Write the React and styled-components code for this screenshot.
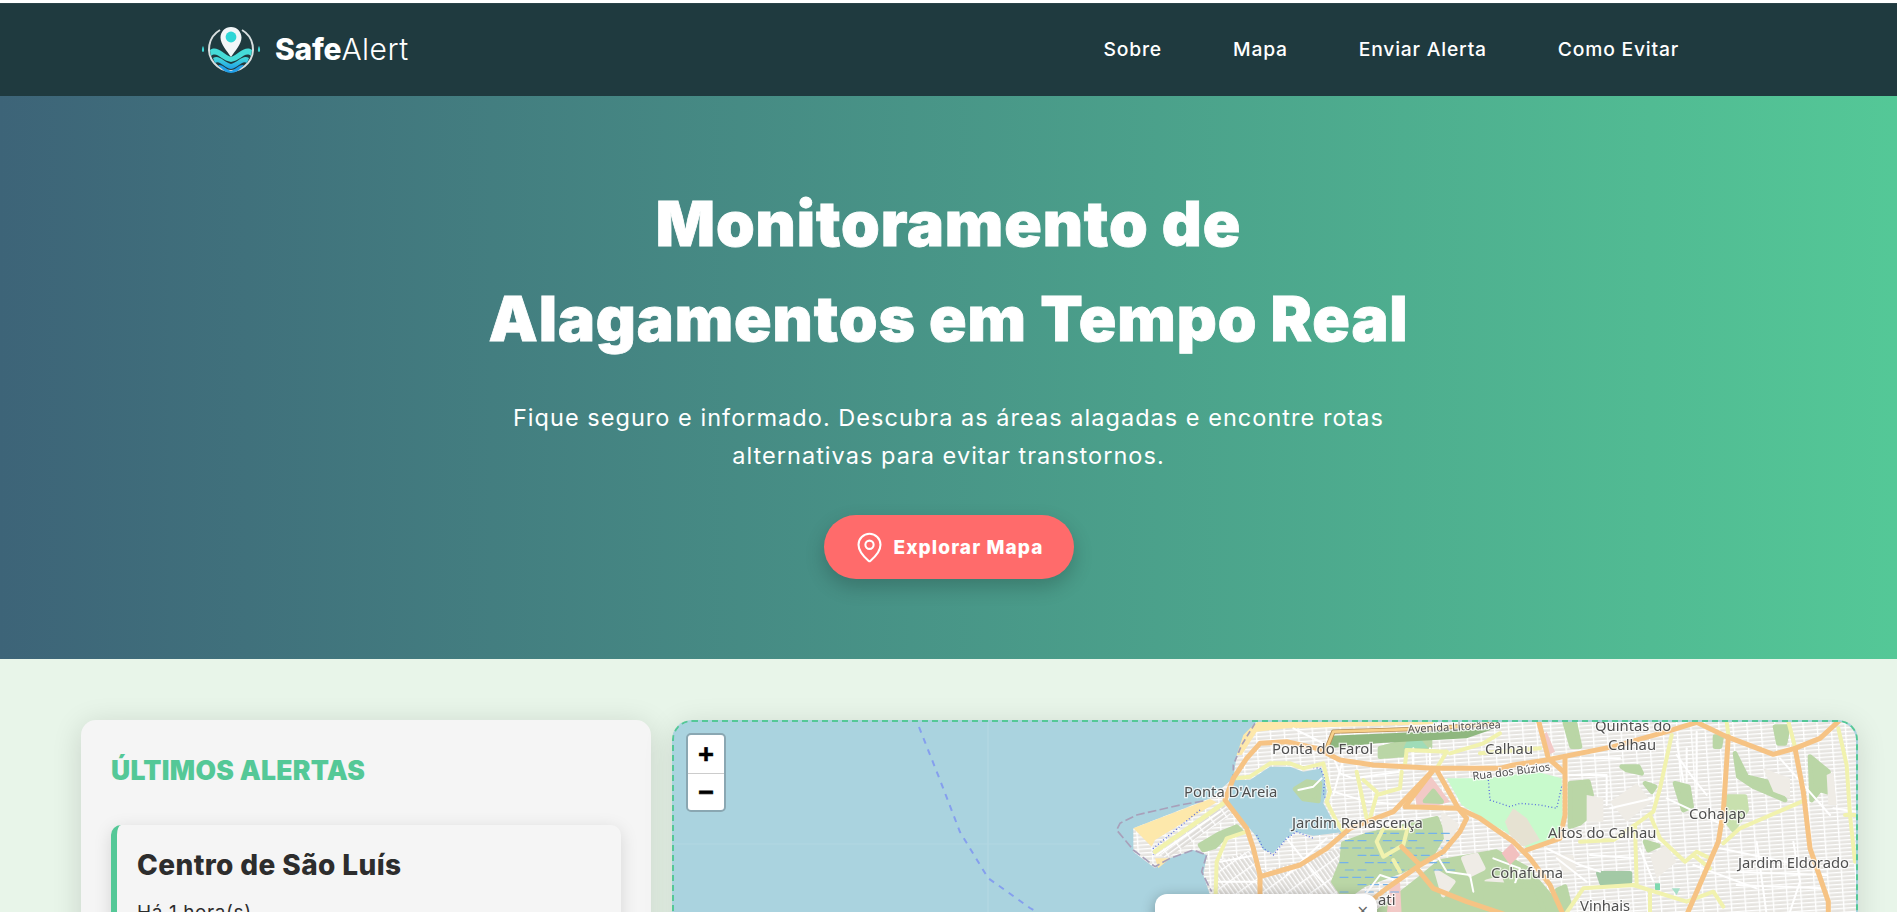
import React from "react";
import styled, { createGlobalStyle } from "styled-components";
import { MapPin } from "lucide-react";

const Global = createGlobalStyle`
  html, body { margin: 0; padding: 0; height: 100%; overflow: hidden; background: #fff; }
  body { font-family: Inter, "Noto Sans", sans-serif; color: #2d2d2d; }
  * { box-sizing: border-box; }
`;

const Page = styled.div`
  height: 912px;
  overflow: hidden;
  padding-top: 3px;
  background: #fff;
`;
const Header = styled.header`
  height: 93px;
  background: #1f3a3f;
  border-top: 1px solid #2a4449;
  display: flex;
  align-items: center;
  justify-content: space-between;
  padding: 0 218px 2px 200px;
`;
const Brand = styled.a`
  display: flex;
  align-items: center;
  gap: 13px;
  color: #fff;
  font-size: 30px;
  line-height: 1;
`;
const BrandStrong = styled.strong`
  font-weight: 800;
  letter-spacing: -0.2px;
`;
const BrandLight = styled.span`
  font-weight: 300;
  letter-spacing: 0.5px;
`;
const Nav = styled.nav`
  display: flex;
  gap: 71px;
`;
const NavLink = styled.a`
  color: #fff;
  font-size: 19.3px;
  font-weight: 500;
  letter-spacing: 0.8px;
`;
const Hero = styled.section`
  height: 563px;
  background: linear-gradient(90deg, #3d6478 0%, #54c897 100%);
  display: flex;
  flex-direction: column;
  align-items: center;
  padding-top: 80px;
  color: #fff;
`;
const Title = styled.h1`
  margin: 0;
  font-size: 62px;
  font-weight: 900;
  line-height: 95px;
  text-align: center;
  letter-spacing: 0.9px;
  -webkit-text-stroke: 0.8px #fff;
`;
const Lead = styled.p`
  margin: 33px 0 40px;
  width: 900px;
  font-size: 23.5px;
  line-height: 38px;
  text-align: center;
  font-weight: 400;
  letter-spacing: 1.03px;
`;
const CTA = styled.a`
  width: 250px;
  height: 64px;
  border-radius: 32px;
  background: #ff6b6b;
  box-shadow: 0 8px 20px rgba(0, 0, 0, 0.2);
  display: flex;
  align-items: center;
  gap: 8px;
  padding-left: 29px;
  color: #fff;
  font-size: 19px;
  font-weight: 800;
  letter-spacing: 1.1px;
`;
const Content = styled.main`
  height: 400px;
  background: #e8f5e9;
  display: grid;
  grid-template-columns: 570px 1186px;
  column-gap: 21px;
  padding: 61px 0 0 81px;
  align-items: start;
`;
const Sidebar = styled.aside`
  background: #f5f5f5;
  border-radius: 15px;
  box-shadow: 0 5px 30px rgba(0, 0, 0, 0.14);
  padding: 29px 30px 30px;
  height: 420px;
`;
const SideTitle = styled.h2`
  margin: 0 0 33px;
  color: #54c897;
  font-size: 26.5px;
  line-height: 43px;
  font-weight: 900;
  text-transform: uppercase;
  letter-spacing: 0.27px;
`;
const AlertCard = styled.article`
  background: #f5f5f5;
  border-left: 6px solid #54c897;
  border-radius: 10px;
  box-shadow: 0 4px 18px rgba(0, 0, 0, 0.13);
  padding: 19px 20px 20px 20px;
`;
const AlertName = styled.h3`
  margin: 0 0 12px;
  font-size: 28px;
  line-height: 43px;
  font-weight: 800;
  letter-spacing: 0.4px;
  color: #2d2d2d;
`;
const AlertTime = styled.p`
  margin: 0;
  font-size: 19px;
  line-height: 28px;
  letter-spacing: 0.6px;
`;
const MapBox = styled.div`
  position: relative;
  height: 420px;
  border: 2px dashed #54c897;
  border-radius: 20px;
  overflow: hidden;
  background: #aad3df;
  box-shadow: 0 5px 30px rgba(0, 0, 0, 0.12);
`;
const MapArt = styled.svg`
  display: block;
  filter: blur(0.5px);
`;
const MapLabel = styled.text`
  font-family: "Noto Sans", "Open Sans", sans-serif;
  font-size: ${(p) => p.$size || 14.8}px;
  fill: #4f4f4f;
  stroke: #fff;
  stroke-opacity: 0.75;
  stroke-width: 2.4px;
  paint-order: stroke;
`;
const ZoomBar = styled.div`
  position: absolute;
  left: 12px;
  top: 11px;
  width: 40px;
  border: 2px solid #8aa7b2;
  border-radius: 5px;
  background: #fff;
  display: flex;
  flex-direction: column;
`;
const ZoomBtn = styled.a`
  height: 37.5px;
  display: flex;
  align-items: center;
  justify-content: center;
  font-family: "DejaVu Sans Mono", monospace;
  font-weight: 700;
  font-size: 25px;
  color: #000;
  -webkit-text-stroke: 0.7px #000;
  & + & { border-top: 1px solid #ccc; }
`;
const Popup = styled.div`
  position: absolute;
  left: 481px;
  top: 172px;
  width: 222px;
  height: 150px;
  background: #fff;
  border-radius: 12px;
  box-shadow: 0 3px 14px rgba(0, 0, 0, 0.3);
`;
const PopupClose = styled.a`
  position: absolute;
  right: 8px;
  top: 9px;
  font-family: "DejaVu Sans", sans-serif;
  font-size: 15px;
  line-height: 16px;
  color: #666;
`;

const Line = ({ p, c, w, dash }) => (
  <polyline points={p} fill="none" stroke={c} strokeWidth={w} strokeLinejoin="round" strokeLinecap={dash ? "butt" : "round"} strokeDasharray={dash} />
);
const Area = ({ p, c }) => <polygon points={p} fill={c} />;
const Blob = ({ p, c }) => <polygon points={p} fill={c} stroke={c} strokeWidth="14" strokeLinejoin="round" />;

const Z7 = "translate(1100 715) scale(.33333)";
const Z8 = "translate(1480 715) scale(.33333)";
const GREEN = "#bad6a6";

const forest7 = [
  "300,390 360,355 410,335 425,350 375,365 345,395 310,405",
  "730,385 800,360 1010,310 1030,360 990,430 900,470 790,510 735,550 700,500 725,440",
  "960,490 1020,440 1190,410 1280,460 1400,600 820,600",
  "840,100 990,60 990,95 920,100 910,120 840,125",
];
const forest8 = [
  "270,205 325,200 335,240 315,265 335,295 300,325 270,335",
  "255,25 285,25 300,95 275,95",
  "765,115 800,185 880,205 915,255 880,240 820,215 775,185",
  "990,125 1045,170 1055,235 1020,225 995,255",
  "585,205 625,215 635,275 610,285",
  "425,155 475,155 485,175 440,165",
  "495,205 525,215 515,230",
  "885,35 925,35 915,85 895,85",
  "495,380 535,392 505,405",
  "0,505 165,515 195,595 5,595",
  "255,515 270,575 245,590 232,525",
  "705,65 725,65 720,95 705,95",
];
const blocks7 = [
  "1090,430 1130,420 1150,460 1110,480",
  "1010,470 1060,500 1030,540",
  "1160,500 1200,490 1220,540 1175,550",
  "1030,300 1070,330 1040,380",
];
const blocks8 = [
  "390,260 470,205 515,260 440,320",
  "320,240 370,250 370,320 320,320",
  "510,420 560,390 590,440 530,490",
  "850,160 930,190 930,250 880,230",
  "1040,180 1060,170 1070,270 1045,270",
  "225,420 280,420 290,470 250,470",
];
const white7 = [
  "690,100 720,175 760,190 900,170",
  "700,230 800,260 920,270",
  "560,370 640,470 720,560",
  "680,370 560,480",
  "360,440 470,420",
  "350,500 470,500",
  "170,420 360,290",
  "730,130 700,240",
  "940,100 940,150",
  "990,100 990,150",
  "580,40 680,90",
  "780,560 840,480 900,500",
  "1010,420 1040,470 1110,480 1120,530",
  "1180,430 1260,460 1240,520",
];
const white8 = [
  "260,180 380,180 380,270",
  "390,280 520,250",
  "590,120 640,190 680,240",
  "560,250 730,330",
  "620,100 620,200",
  "520,370 580,400",
  "200,400 300,450 360,470",
  "230,430 320,500",
  "480,400 520,500",
  "720,400 960,450",
  "740,470 1040,480",
  "830,380 860,600",
  "900,130 1050,300",
  "1060,280 1130,290",
  "640,450 830,520",
  "770,510 1030,520",
  "590,80 610,200",
  "650,50 650,250",
  "300,130 420,130",
  "330,420 470,430",
  "940,380 960,500 930,590",
];
const yellow7 = [
  "410,190 450,185 510,145 570,145 610,160 670,145 690,230 680,260 710,320 730,350",
  "440,350 380,370 350,440 345,600",
  "770,170 800,310",
  "810,310 830,240 900,220 905,170",
  "790,195 830,230",
  "920,350 910,390 850,425 830,380 850,340 930,340",
  "880,435 900,470",
  "1050,115 1150,85 1200,55",
  "920,105 1040,110",
  "920,105 915,150",
  "1040,110 1010,160",
];
const yellow8 = [
  "0,115 180,100",
  "575,60 540,220 520,290 465,330 470,510",
  "510,300 540,370 615,440 650,410 690,430",
  "730,385 780,340 965,260",
  "255,600 310,520 460,510 620,560 700,530 730,575",
  "510,530 510,600",
  "300,380 400,375 465,330",
  "640,420 690,460",
  "1075,40 1100,150 1110,300 1125,440",
  "925,20 945,95",
  "740,20 745,60",
  "1095,300 1130,300",
];
const orange7 = [
  "400,190 440,130 480,85 560,80 650,100 720,135 820,150 1000,160 1200,160",
  "400,190 375,255 440,340 460,400 480,480 480,600",
  "480,485 600,450 680,400 750,340 880,290 1000,165",
  "1000,165 915,275 1075,280 1010,165",
  "1075,280 1100,310 1080,350 1030,410 960,450 905,395",
  "960,450 860,520 810,560 780,600",
  "950,460 1000,520 1100,560 1220,600",
  "1075,280 1140,310 1240,380 1290,430 1350,510 1390,600",
];
const orange8 = [
  "60,160 100,150 200,135 400,95 560,50 650,22 740,65 880,118 945,100 1020,70 1080,15",
  "140,405 240,370 255,300 255,130",
  "175,15 205,130 250,170",
  "745,65 730,290 715,380 620,600",
  "945,100 970,230 990,400 1045,560 1045,600",
];
const wetDashes = [];
for (let r = 0; r < 9; r++) {
  for (let c = 0; c < 9; c++) {
    if ((r * 5 + c * 3) % 4 === 3) continue;
    const x = 720 + c * 38 + (r % 2) * 16;
    const y = 355 + r * 22;
    if (y > 470 && x > 900) continue;
    wetDashes.push(`${x},${y} ${x + 24},${y}`);
  }
}

const labels = [
  ["Ponta do Farol", 1272, 754],
  ["Ponta D'Areia", 1184, 797],
  ["Jardim Renascença", 1292, 828],
  ["Calhau", 1485, 754],
  ["Quintas do", 1595, 731],
  ["Calhau", 1608, 750],
  ["Cohajap", 1689, 819],
  ["Altos do Calhau", 1548, 838],
  ["Jardim Eldorado", 1738, 868],
  ["Cohafuma", 1491, 878],
  ["Vinhais", 1580, 911],
  ["ati", 1378, 905],
];

const Hatch = ({ id, angle, base }) => (
  <pattern id={id} width="42" height="12" patternUnits="userSpaceOnUse" patternTransform={`rotate(${angle})`}>
    <rect width="42" height="12" fill={base} />
    <rect width="42" height="4" fill="#fff" />
    <rect width="4" height="12" fill="#fff" />
  </pattern>
);

function CityMap() {
  return (
    <MapArt width="1186" height="420" viewBox="674 722 1186 420" aria-label="Mapa de São Luís">
      <defs>
        <Hatch id="blkA" angle={-4} base="#e6e4e0" />
        <Hatch id="blkB" angle={-36} base="#dedcd8" />
        <Hatch id="blkC" angle={55} base="#dedcd8" />
      </defs>
      <rect x="674" y="722" width="1186" height="420" fill="#aad3df" />
      <line x1="988" y1="722" x2="988" y2="912" stroke="#b6d9e3" strokeWidth="1" />
      <line x1="674" y1="844" x2="1100" y2="844" stroke="#b2d7e2" strokeWidth="1" />
      <polyline points="919,727 940,780 960,832 988,878 1030,908 1060,925" fill="none" stroke="#859fee" strokeWidth="2" strokeDasharray="6 6" />

      <g transform={Z7}>
        <Area c="url(#blkA)" p="480,0 2300,0 2300,700 340,700 330,540 310,480 320,420 280,405 210,430 165,460 100,410 100,340 330,250 400,190 410,120" />
        <Area c="url(#blkB)" p="165,410 370,265 395,300 200,430" />
        <Area c="url(#blkC)" p="350,440 470,400 490,600 340,600" />
        <Area c="url(#blkC)" p="480,470 600,440 720,400 780,500 720,590 490,600" />
        {forest7.map((p) => <Blob key={p} p={p} c={GREEN} />)}
        {blocks7.map((p) => <Blob key={p} p={p} c="#efece6" />)}
        <Area c="#fde8ab" p="100,340 330,252 350,262 165,375 155,395" />
        <Area c="#fde8ab" p="165,430 210,430 175,460" />
        <Area c="#fde8ab" p="480,16 1000,16 1000,28 560,40 470,50 425,120 410,120 430,60 460,30" />
        <Area c="#aad3df" p="400,195 450,195 510,155 570,155 610,170 665,160 680,230 670,265 705,330 725,352 640,362 585,350 550,380 520,415 490,405 465,360 440,330 385,262" />
        <Blob c={GREEN} p="585,222 620,200 660,205 655,258 610,252" />
        <Line p="595,225 640,215 665,190" c="#fff" w="6" />
        <Line p="465,25 425,90 400,150 400,190" c="#a8a0ba" w="5" dash="18 10" />
        <Line p="310,258 240,270 110,300 60,325 50,345 100,405 165,455 210,430 280,405 320,420 305,470 335,530" c="#a8a0ba" w="5" dash="26 10" />
        <Area c="#f2c9c6" p="990,180 1050,260 1000,275 950,270 945,245" />
        <Blob c={GREEN} p="975,258 1000,228 1025,260" />
        <Area c="#f2c9c6" p="870,510 900,500 905,600 860,600" />
        <Area c="#9fdcb8" p="925,70 960,70 985,100 910,100" />
        {wetDashes.map((p) => <Line key={p} p={p} c="#74b2ea" w="3.5" />)}
        {white7.map((p) => <Line key={p} p={p} c="#fff" w="6" />)}
        <Line p="610,155 660,160 675,190 670,235 690,280" c="#5a6fe0" w="4" dash="3 7" />
        <Line p="470,360 490,400 520,420 560,370 590,350 640,370" c="#5a6fe0" w="4" dash="3 7" />
        <Line p="300,285 160,400 160,420" c="#5a6fe0" w="4" dash="3 7" />
      </g>

      <g transform={Z8}>
        {forest8.map((p) => <Blob key={p} p={p} c={GREEN} />)}
        <Blob c="#c8e0ae" p="745,245 795,245 800,285 760,345 745,325" />
        <Blob c="#a3c9a5" p="355,475 450,475 450,500 365,505" />
        {blocks8.map((p) => <Area key={p} p={p} c="#efece6" />)}
        <Area c="#c8facc" p="-100,190 20,190 170,170 245,190 250,370 140,400 100,365 0,305 -55,270" />
        <Area c="#e6e2d2" p="100,280 140,310 180,375 130,395 90,360 75,320" />
        <Area c="#f2c0bf" p="65,415 95,385 120,420 90,450" />
        <Area c="#f2c9c6" p="200,50 225,110 205,120 190,60" />
        <Area c="#7fd9b0" p="525,505 540,505 540,525 525,525" />
        <Area c="#a8e0c8" p="575,520 600,520 590,540" />
        {white8.map((p) => <Line key={p} p={p} c="#fff" w="6" />)}
        <Line p="25,195 30,255 90,275 120,265 180,270 230,280 245,215" c="#5a6fe0" w="4" dash="3 7" />
      </g>

      <g transform={Z7}>
        <Area c="#8fb77f" p="690,62 1180,42 1100,70 830,85 690,100" />
        <Line p="680,100 700,50 1000,40 1190,25" c="#b98f57" w="13" />
        <Line p="680,100 700,50 1000,40 1190,25" c="#f7d08a" w="8" />
        <Line p="165,410 370,265" c="#f1f2ae" w="14" />
        {yellow7.map((p) => <Line key={p} p={p} c="#f1f2ae" w="12" />)}
        {orange7.map((p) => <Line key={p} p={p} c="#f6c384" w="15" />)}
      </g>
      <g transform={Z8}>
        {yellow8.map((p) => <Line key={p} p={p} c="#f1f2ae" w="12" />)}
        {orange8.map((p) => <Line key={p} p={p} c="#f6c384" w="15" />)}
      </g>

      <MapLabel $size={11} transform="translate(1408 733) rotate(-3)">Avenida Litorânea</MapLabel>
      <MapLabel $size={11} transform="translate(1473 780) rotate(-7)">Rua dos Búzios</MapLabel>
      {labels.map(([t, x, y]) => (
        <MapLabel key={t + x} x={x} y={y}>{t}</MapLabel>
      ))}
    </MapArt>
  );
}

function LogoMark() {
  return (
    <svg width="62" height="60" viewBox="0 0 62 60" aria-hidden="true">
      <defs>
        <linearGradient id="wave" x1="0" y1="0" x2="0" y2="1">
          <stop offset="0" stopColor="#45dcd8" />
          <stop offset="1" stopColor="#1f9fe8" />
        </linearGradient>
      </defs>
      <path d="M3 27 C1.8 29 1.4 33 3 33 C4.6 33 4.2 29 3 27Z" fill="#3fd6d6" />
      <path d="M59 27 C57.8 29 57.4 33 59 33 C60.6 33 60.2 29 59 27Z" fill="#3fd6d6" />
      <path d="M20 11 A22 22 0 1 0 42 11" fill="none" stroke="#d8dfe0" strokeWidth="2" />
      <path d="M10 31 C17 26 23 35 31 38 C39 35 45 26 52 31 L51 37 C45 32 40 42 31 43 C22 42 17 32 11 37Z" fill="#45dcd8" />
      <path d="M13 39 C19 35 24 43 31 45 C38 43 43 35 49 39 L47 44 C42 41 38 49 31 50 C24 49 20 41 15 44Z" fill="url(#wave)" />
      <path d="M18 46 C23 45 27 51 31 52 C35 51 39 45 44 46 C40 51 35 54 31 54 C27 54 22 51 18 46Z" fill="#1f9fe8" />
      <path d="M31 8 C25 8 20.5 12.7 20.5 18.5 C20.5 25 27 32 31 38 C35 32 41.5 25 41.5 18.5 C41.5 12.7 37 8 31 8Z" fill="#f2f6f8" />
      <circle cx="31" cy="18" r="5.4" fill="#2fd6d6" />
    </svg>
  );
}

export default function App() {
  return (
    <Page>
      <Global />
      <Header>
        <Brand>
          <LogoMark />
          <span><BrandStrong>Safe</BrandStrong><BrandLight>Alert</BrandLight></span>
        </Brand>
        <Nav>
          <NavLink>Sobre</NavLink>
          <NavLink>Mapa</NavLink>
          <NavLink>Enviar Alerta</NavLink>
          <NavLink>Como Evitar</NavLink>
        </Nav>
      </Header>
      <Hero>
        <Title>Monitoramento de<br />Alagamentos em Tempo Real</Title>
        <Lead>Fique seguro e informado. Descubra as áreas alagadas e encontre rotas<br />alternativas para evitar transtornos.</Lead>
        <CTA><MapPin size={33} strokeWidth={1.5} />Explorar Mapa</CTA>
      </Hero>
      <Content>
        <Sidebar>
          <SideTitle>Últimos Alertas</SideTitle>
          <AlertCard>
            <AlertName>Centro de São Luís</AlertName>
            <AlertTime>Há 1 hora(s)</AlertTime>
          </AlertCard>
        </Sidebar>
        <MapBox>
          <CityMap />
          <ZoomBar>
            <ZoomBtn>+</ZoomBtn>
            <ZoomBtn>−</ZoomBtn>
          </ZoomBar>
          <Popup><PopupClose>×</PopupClose></Popup>
        </MapBox>
      </Content>
    </Page>
  );
}
